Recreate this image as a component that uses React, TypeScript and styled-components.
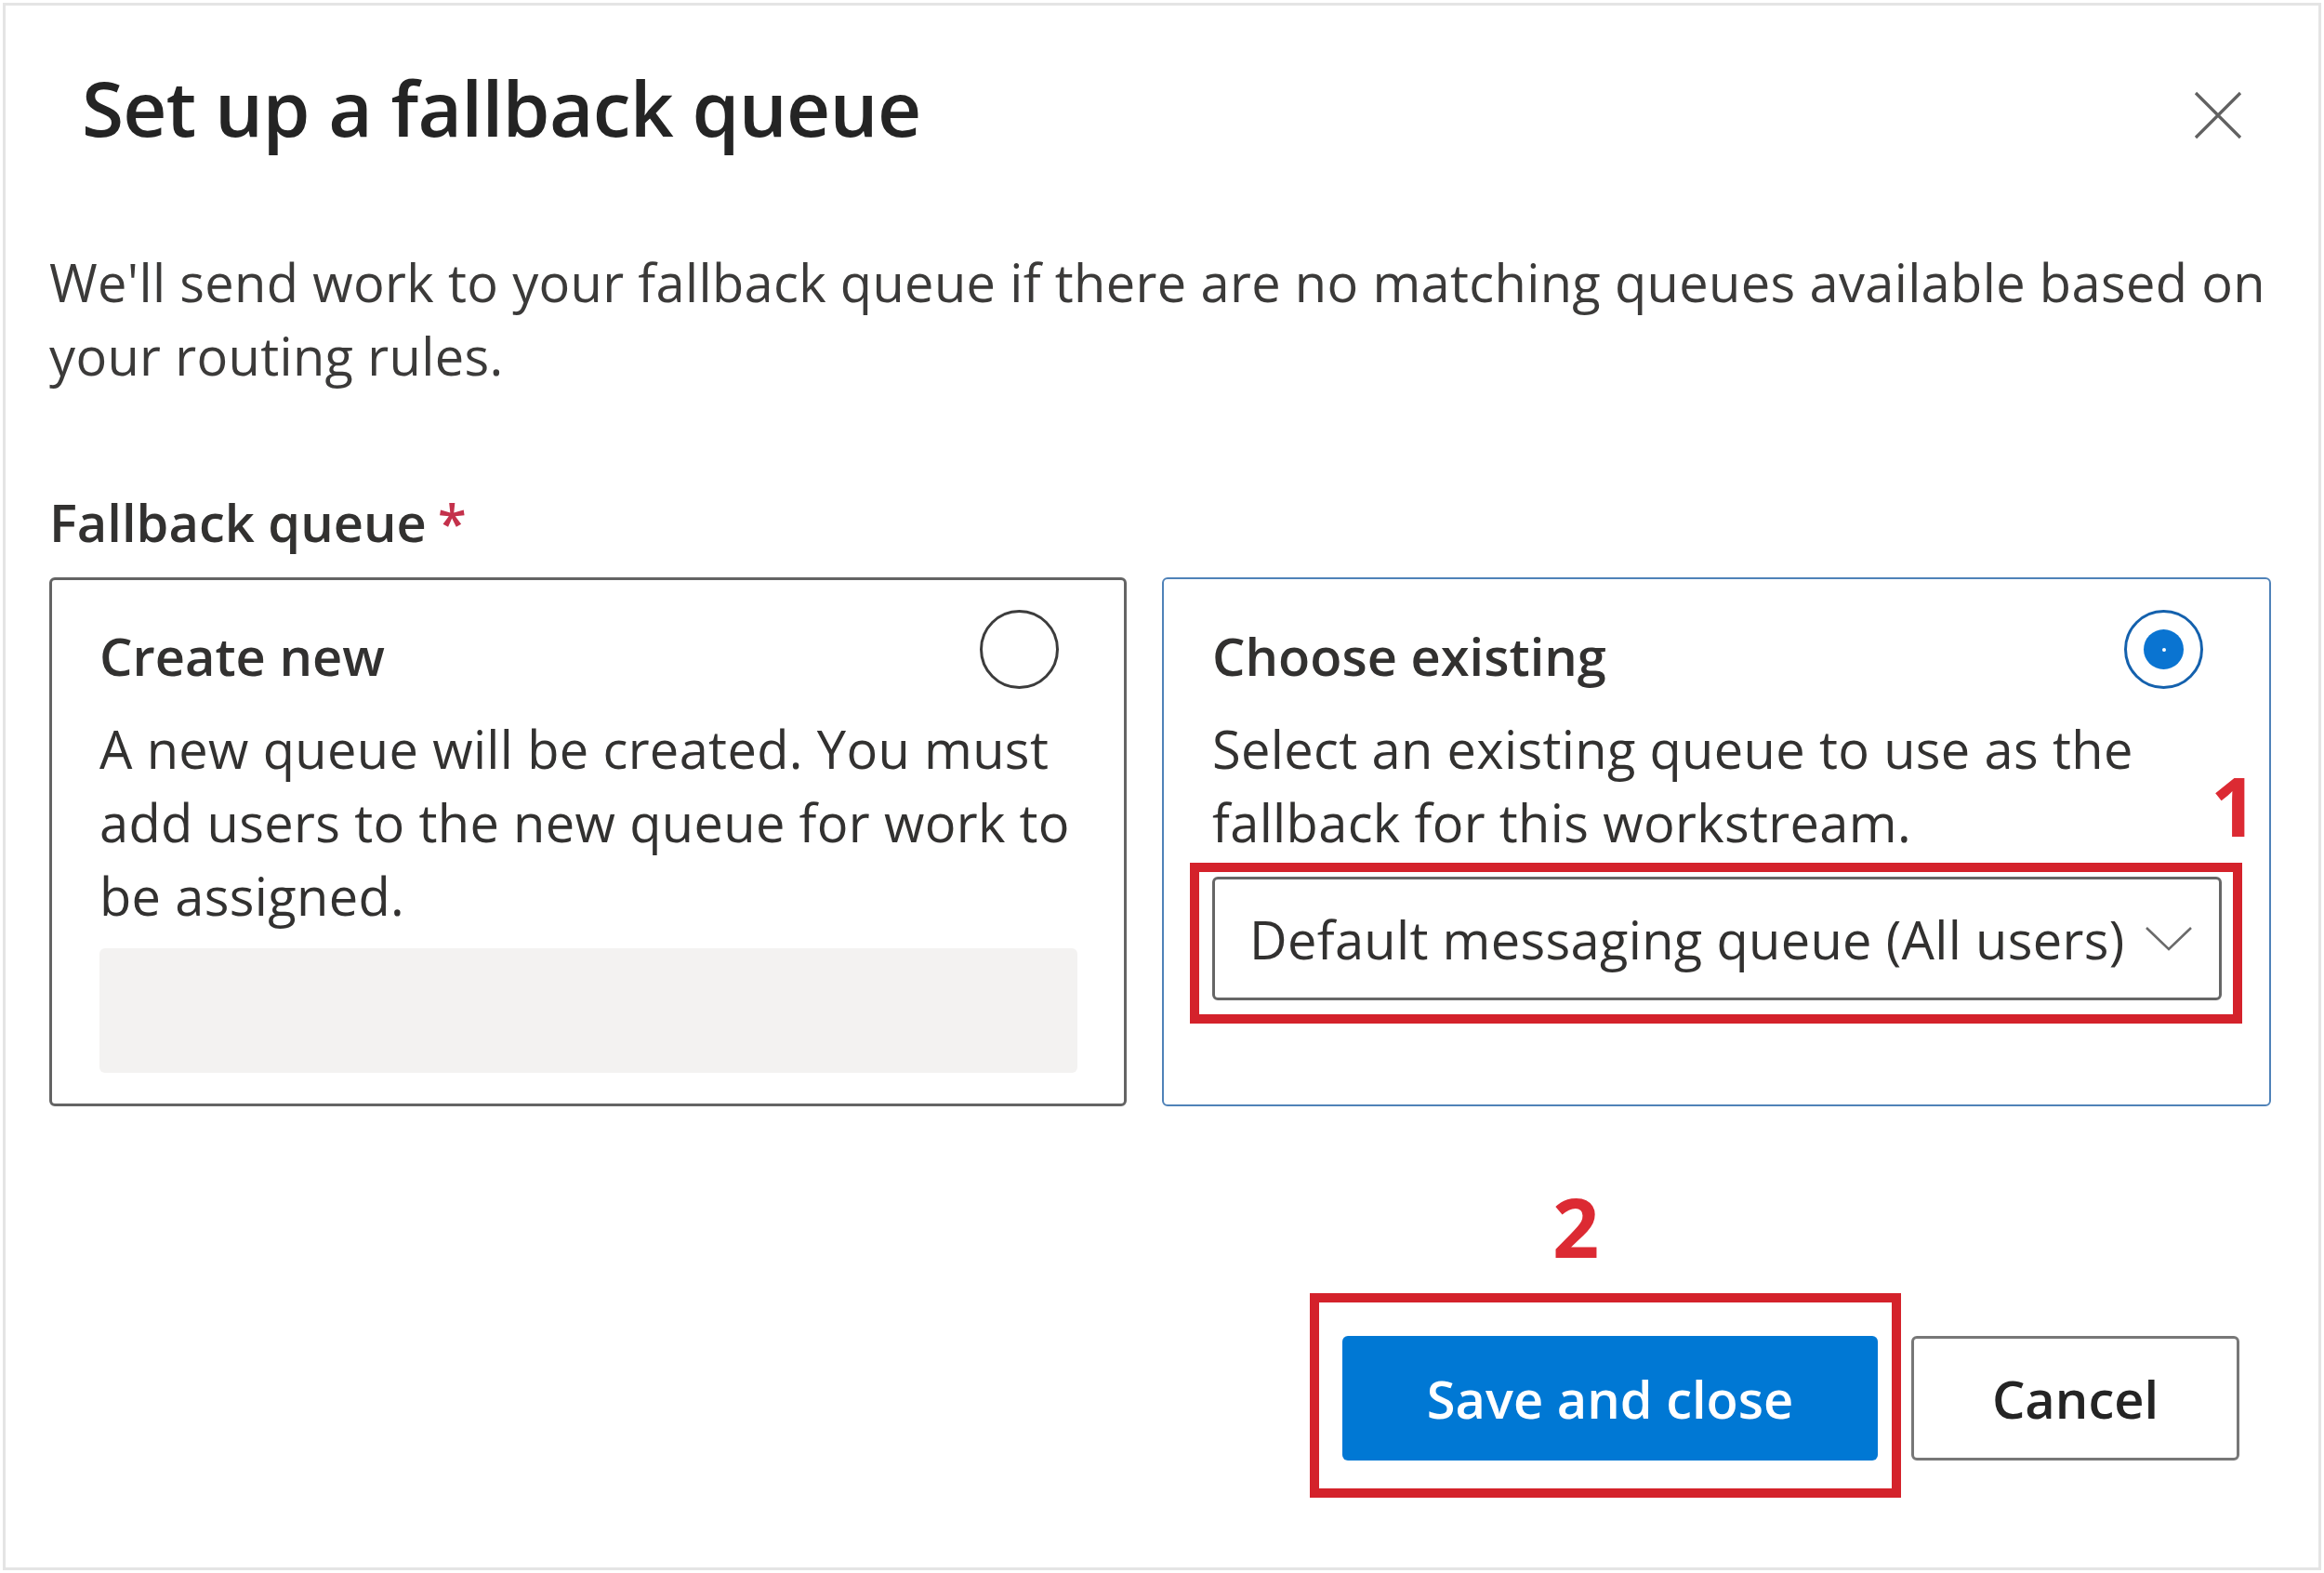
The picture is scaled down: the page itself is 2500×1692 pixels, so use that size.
import { FC } from "react";
import styled, { createGlobalStyle } from "styled-components";

const GlobalStyle = createGlobalStyle`
  html, body {
    margin: 0;
    padding: 0;
    background: #ffffff;
  }
  body {
    font-family: "Open Sans", "Noto Sans", sans-serif;
    color: #323130;
  }
`;

const Page = styled.div`
  width: 2500px;
  height: 1692px;
  padding: 3px;
  box-sizing: border-box;
  background: #ffffff;
`;

const Dialog = styled.section`
  height: 100%;
  box-sizing: border-box;
  border: 3px solid #e4e4e4;
  padding: 49px 50px 0 47px;
  display: flex;
  flex-direction: column;
`;

const Header = styled.header`
  display: flex;
  justify-content: space-between;
  align-items: flex-start;
`;

const Title = styled.h1`
  margin: 0 0 0 35px;
  font-size: 82px;
  line-height: 120px;
  font-weight: 600;
  color: #242424;
  letter-spacing: -0.75px;
`;

const CloseButton = styled.button`
  width: 52px;
  height: 52px;
  margin: 43px 32px 0 0;
  padding: 0;
  border: none;
  background: transparent;
  cursor: pointer;
  svg {
    display: block;
  }
`;

const Text = styled.p<{ mt?: number }>`
  margin: ${(p) => p.mt || 0}px 0 0 0;
  font-size: 56px;
  line-height: 79px;
  font-weight: 400;
  color: #3b3a39;
  letter-spacing: 0.34px;
  white-space: nowrap;
`;

const Label = styled.div`
  margin-top: 100px;
  font-size: 56px;
  line-height: 79px;
  font-weight: 600;
  color: #323130;
  span {
    color: #c4314b;
    padding-left: 12px;
  }
`;

const CardGrid = styled.div`
  margin-top: 20px;
  display: grid;
  grid-template-columns: 1159px 1193px;
  gap: 38px;
`;

const Card = styled.div<{ selected?: boolean }>`
  box-sizing: border-box;
  border: ${(p) => (p.selected ? "2px solid #4f82b8" : "3px solid #646464")};
  border-radius: 6px;
  padding: ${(p) => (p.selected ? "43px 51px 34px 52px" : "42px 50px 33px 51px")};
  display: flex;
  flex-direction: column;
`;

const CardHeader = styled.div`
  display: flex;
  justify-content: space-between;
  align-items: flex-start;
  height: 79px;
`;

const CardTitle = styled.div`
  font-size: 56px;
  line-height: 79px;
  font-weight: 600;
  color: #323130;
`;

const Radio = styled.span<{ checked?: boolean }>`
  width: 85px;
  height: 85px;
  box-sizing: border-box;
  margin: -10px 20px 0 0;
  border-radius: 50%;
  border: 3px solid ${(p) => (p.checked ? "#1461ad" : "#3c3c3c")};
  display: flex;
  align-items: center;
  justify-content: center;
  flex-shrink: 0;
`;

const RadioDot = styled.span`
  width: 43px;
  height: 43px;
  border-radius: 50%;
  background: #0a74d1;
  display: flex;
  align-items: center;
  justify-content: center;
  &::after {
    content: "";
    width: 4px;
    height: 4px;
    border-radius: 50%;
    background: #ffffff;
  }
`;

const CardText = styled(Text)`
  margin-top: 21px;
  color: #323130;
`;

const Placeholder = styled.div`
  margin-top: 17px;
  height: 134px;
  border-radius: 6px;
  background: #f3f2f1;
`;

const Annotated = styled.div<{ mt?: number }>`
  position: relative;
  margin-top: ${(p) => p.mt || 0}px;
`;

const Highlight = styled.div<{ t: number; r: number; b: number; l: number }>`
  position: absolute;
  top: ${(p) => p.t}px;
  right: ${(p) => p.r}px;
  bottom: ${(p) => p.b}px;
  left: ${(p) => p.l}px;
  border: 10px solid #d4222b;
  box-sizing: border-box;
  pointer-events: none;
`;

const StepNumber = styled.span<{ pos: string }>`
  position: absolute;
  ${(p) => p.pos};
  width: 50px;
  text-align: center;
  font-family: "Open Sans", sans-serif;
  font-size: 88px;
  line-height: 88px;
  font-weight: 700;
  color: #dc2a33;
`;

const Select = styled.div`
  height: 133px;
  box-sizing: border-box;
  border: 3px solid #666666;
  border-radius: 6px;
  padding: 0 28px 0 37px;
  display: flex;
  align-items: center;
  justify-content: space-between;
  font-size: 56px;
  letter-spacing: 0.32px;
  color: #323130;
  white-space: nowrap;
  svg {
    display: block;
  }
`;

const Footer = styled.footer`
  margin-top: 247px;
  padding-right: 35px;
  display: flex;
  justify-content: flex-end;
  gap: 36px;
`;

const Button = styled.button<{ primary?: boolean }>`
  height: 134px;
  width: ${(p) => (p.primary ? "576px" : "353px")};
  box-sizing: border-box;
  border-radius: 6px;
  border: ${(p) => (p.primary ? "none" : "3px solid #777777")};
  background: ${(p) => (p.primary ? "#0078d4" : "#ffffff")};
  color: ${(p) => (p.primary ? "#ffffff" : "#242424")};
  font-family: "Open Sans", sans-serif;
  font-size: 56px;
  font-weight: 600;
  cursor: pointer;
`;

const CloseIcon: FC = () => (
  <svg width="52" height="52" viewBox="0 0 52 52">
    <path d="M2 2 L50 50 M50 2 L2 50" stroke="#616161" strokeWidth="3.2" fill="none" />
  </svg>
);

const Chevron: FC = () => (
  <svg width="52" height="27" viewBox="0 0 52 27">
    <path d="M2 2 L26 25 L50 2" stroke="#6a6a6a" strokeWidth="2.6" fill="none" />
  </svg>
);

const App: FC = () => {
  return (
    <Page>
      <GlobalStyle />
      <Dialog>
        <Header>
          <Title>Set up a fallback queue</Title>
          <CloseButton aria-label="Close">
            <CloseIcon />
          </CloseButton>
        </Header>
        <Text mt={89}>
          We'll send work to your fallback queue if there are no matching queues available based on
          <br />
          your routing rules.
        </Text>
        <Label>
          Fallback queue<span>*</span>
        </Label>
        <CardGrid>
          <Card>
            <CardHeader>
              <CardTitle>Create new</CardTitle>
              <Radio />
            </CardHeader>
            <CardText>
              A new queue will be created. You must
              <br />
              add users to the new queue for work to
              <br />
              be assigned.
            </CardText>
            <Placeholder />
          </Card>
          <Card selected>
            <CardHeader>
              <CardTitle>Choose existing</CardTitle>
              <Radio checked>
                <RadioDot />
              </Radio>
            </CardHeader>
            <CardText>
              Select an existing queue to use as the
              <br />
              fallback for this workstream.
            </CardText>
            <Annotated mt={19}>
              <Select>
                <span>Default messaging queue (All users)</span>
                <Chevron />
              </Select>
              <Highlight t={-15} r={-22} b={-25} l={-24}>
                <StepNumber pos="top: -116px; right: -26px;">1</StepNumber>
              </Highlight>
            </Annotated>
          </Card>
        </CardGrid>
        <Footer>
          <Annotated>
            <Button primary>Save and close</Button>
            <Highlight t={-46} r={-25} b={-40} l={-35}>
              <StepNumber pos="top: -126px; left: 251px;">2</StepNumber>
            </Highlight>
          </Annotated>
          <Button>Cancel</Button>
        </Footer>
      </Dialog>
    </Page>
  );
};

export default App;
